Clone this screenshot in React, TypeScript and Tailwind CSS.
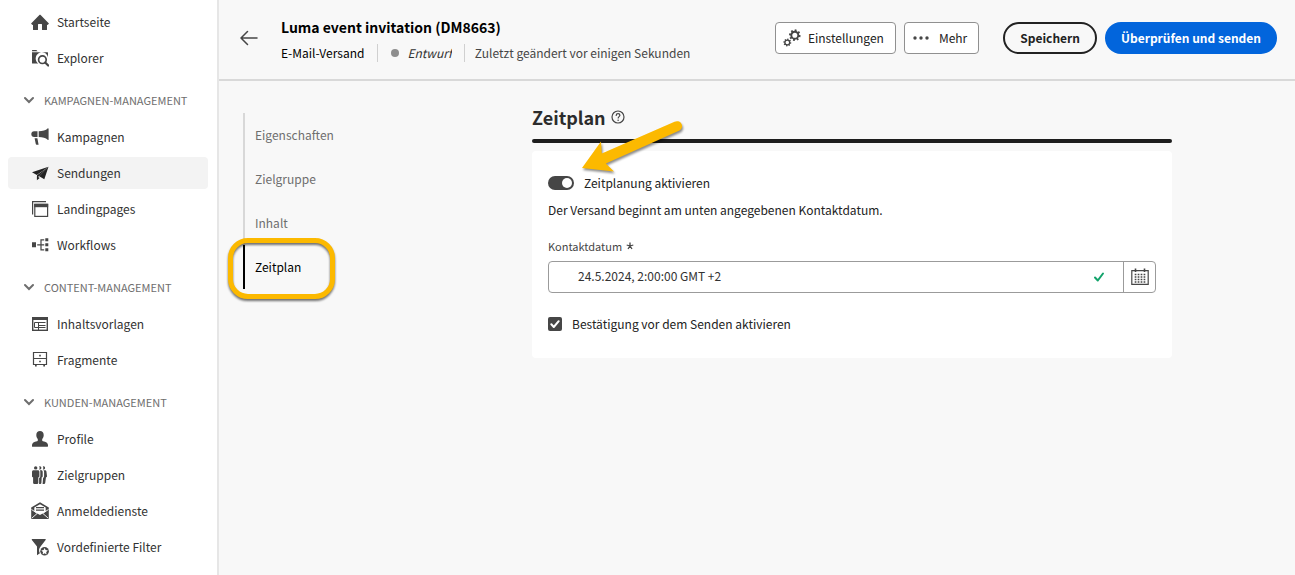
import type { ReactNode } from "react";

type IconProps = { children: ReactNode };

function Icon({ children }: IconProps) {
  return (
    <svg viewBox="0 0 18 18" className="size-[18px] shrink-0" fill="currentColor" aria-hidden="true">
      {children}
    </svg>
  );
}

const HomeIcon = () => (
  <Icon>
    <path d="M17.67 10.13 9.38 1.83a.53.53 0 0 0-.75 0L.33 10.13a.53.53 0 0 0 0 .75l.98.97a.5.5 0 0 0 .36.15H2v4.5a.5.5 0 0 0 .5.5h4a.5.5 0 0 0 .5-.5v-5a.5.5 0 0 1 .5-.5h3a.5.5 0 0 1 .5.5v5a.5.5 0 0 0 .5.5h4a.5.5 0 0 0 .5-.5V12h.33a.5.5 0 0 0 .36-.15l.98-.97a.53.53 0 0 0 0-.75Z" />
  </Icon>
);

const ExplorerIcon = () => (
  <Icon>
    <path d="M1 2.300V1.500A.5.5 0 0 1 1.500 1H5.300l1.300 1.300Z" />
    <path d="M1 3.200H16.500a.5.5 0 0 1 .5.5V8.500A6.200 6.200 0 1 0 7.200 14.500H1.500A.5.5 0 0 1 1 14Z" />
    <circle cx="11.400" cy="10.700" r="3.800" fill="none" stroke="currentColor" strokeWidth="1.700" />
    <path d="m14.200 13.500 3 3" stroke="currentColor" strokeWidth="2.200" strokeLinecap="round" />
  </Icon>
);

const CampaignIcon = () => (
  <Icon>
    <path d="M6.500 3.200v5.800H3.200A2.900 2.900 0 0 1 3.200 3.200ZM7.700 3.200C11.500 3.200 15 2.200 16.600.4c.4-.3 1-.1 1 .4v10.600c0 .5-.6.7-1 .4C15 10 11.500 9 7.700 9Z" />
    <path d="M3.600 10.200H6.400L7.600 16.700H5.600a.8.8 0 0 1-.8-.6Z" />
  </Icon>
);

const SendIcon = () => (
  <Icon>
    <path d="M17.500 2.800 1 8.300l4.800 2.800ZM17.500 2.800 13.300 15.200 8.200 12.300ZM5.900 12.200V16.200L8.700 13.900Z" />
    <path d="M17.500 2.800 6 11.200v2l2.200-.9Z" />
  </Icon>
);

const LandingIcon = () => (
  <Icon>
    <path d="M1.600 14.500V1.600H15" fill="none" stroke="currentColor" strokeWidth="1.200" />
    <rect x="3.800" y="4.400" width="12.800" height="12" fill="none" stroke="currentColor" strokeWidth="1.200" />
    <path d="M3.200 3.800h14v3.400h-14Z" />
  </Icon>
);

const WorkflowIcon = () => (
  <Icon>
    <path d="M1 6.300h4v5H1ZM14.300 2.200h3v3h-3ZM14.300 7.300h3v3h-3ZM14.300 12.300h3v3h-3Z" />
    <path d="M6.200 8.800h7M13.200 3.800H10v10h3.200" fill="none" stroke="currentColor" strokeWidth="1.200" />
  </Icon>
);

const TemplateIcon = () => (
  <Icon>
    <rect x="1.700" y="2.700" width="14.600" height="12.600" fill="none" stroke="currentColor" strokeWidth="1.400" />
    <path d="M1.500 2.500h15v2.500h-15Z" />
    <path d="M3.500 7.500H14.500M7.500 7.500V15M7.500 10.500H14.500M3.500 12.500H14.500M3.500 7.500V12.500" fill="none" stroke="currentColor" />
  </Icon>
);

const FragmentIcon = () => (
  <Icon>
    <path d="M2.500 1.500h13v12h-13ZM2.500 7.500h13" fill="none" stroke="currentColor" strokeWidth="1.200" />
    <path d="M8.200 3.800h1.600v1.600H8.200ZM8.200 9.700h1.600v1.600H8.200ZM4 13.500h1.700v2H4ZM12.300 13.500H14v2h-1.700Z" />
  </Icon>
);

const ProfileIcon = () => (
  <Icon>
    <path d="M9 1c2.200 0 3.700 1.600 3.700 4 0 1.600-.6 3.200-1.500 4.100v1.300c0 .5.300.7.800.8 2.900.5 5 1.700 5 3.900v1.100c0 .3-.2.500-.5.500h-15a.5.5 0 0 1-.5-.5v-1.100c0-2.200 2.100-3.400 5-3.900.5-.1.800-.3.800-.8V9.100C5.900 8.200 5.300 6.600 5.300 5c0-2.400 1.500-4 3.700-4Z" />
  </Icon>
);

const AudienceIcon = () => (
  <Icon>
    <circle cx="4.700" cy="1.900" r="1.700" />
    <path d="M2.700 4.200h4c1.100 0 1.700.7 1.700 1.700v4.300c0 .7-.5 1-1.100 1v5.900c0 .5-.4.800-.9.800H3c-.5 0-.9-.3-.9-.8v-5.900c-.6 0-1.100-.3-1.100-1V5.900c0-1 .6-1.700 1.700-1.700Z" />
    <path d="M8.100.3a1.700 1.700 0 1 1 0 3.200 3 3 0 0 0 0-3.200ZM8.900 4.200h1.200c1 0 1.600.7 1.600 1.700v4.300c0 .7-.5 1-1 1l-.3 5.900c0 .5-.4.800-.9.800H8.100V12c.7-.3 1.200-.9 1.200-1.700V6c0-.7-.1-1.300-.4-1.800Z" />
    <path d="M11.800.3a1.700 1.700 0 1 1 0 3.200 3 3 0 0 0 0-3.200ZM12.400 4.200h1.500c1 0 1.600.7 1.600 1.700l.5 4.300c0 .7-.5 1-1 1l-.8 5.900c0 .5-.4.800-.9.800h-1.700l.5-6c.7-.3 1-.9 1-1.600V6c0-.7-.2-1.300-.7-1.800Z" />
  </Icon>
);

const MailIcon = () => (
  <Icon>
    <path d="M9 .2 17.800 5.400v10.800a.8.8 0 0 1-.8.8H1a.8.8 0 0 1-.8-.8V5.400Z" />
    <path d="M3.300 5.600 9 2.200l5.700 3.400v4.100L9 13 3.300 9.700Z" fill="white" />
    <path d="M5 5.700h8M5 8.200h8" stroke="currentColor" strokeWidth="1.200" />
    <path d="M.5 7.500 6.300 11.300 1 16M17.500 7.500l-5.800 3.800L17 16" fill="none" stroke="white" strokeWidth=".9" />
  </Icon>
);

const FilterIcon = () => (
  <Icon>
    <path d="M1.300 1h12.900c.5 0 .7.6.4 1L9.800 8.200a6 6 0 0 0-.9 7L6 17.200V8.500L.9 2C.6 1.600.8 1 1.300 1Z" />
    <circle cx="13.600" cy="13.200" r="4.300" />
    <path d="m13.600 9.900 1 2.200 2.300.3-1.700 1.600.4 2.400-2-1.200-2 1.200.4-2.400-1.700-1.600 2.300-.3Z" fill="white" />
  </Icon>
);

const gearTeeth = [0, 45, 90, 135, 180, 225, 270, 315];

function Gear({ cx, cy, r }: { cx: number; cy: number; r: number }) {
  return (
    <g>
      <circle cx={cx} cy={cy} r={r} fill="none" stroke="currentColor" strokeWidth={r * 0.55} />
      {gearTeeth.map((angle) => (
        <path
          key={angle}
          d={`M${cx} ${cy - r}V${cy - r * 1.65}`}
          transform={`rotate(${angle + 10} ${cx} ${cy})`}
          stroke="currentColor"
          strokeWidth={r * 0.55}
        />
      ))}
    </g>
  );
}

type NavEntry = { label: string; icon: () => ReactNode; active?: boolean };
type NavSection = { title?: string; items: NavEntry[] };

const sections: NavSection[] = [
  {
    items: [
      { label: "Startseite", icon: HomeIcon },
      { label: "Explorer", icon: ExplorerIcon },
    ],
  },
  {
    title: "KAMPAGNEN-MANAGEMENT",
    items: [
      { label: "Kampagnen", icon: CampaignIcon },
      { label: "Sendungen", icon: SendIcon, active: true },
      { label: "Landingpages", icon: LandingIcon },
      { label: "Workflows", icon: WorkflowIcon },
    ],
  },
  {
    title: "CONTENT-MANAGEMENT",
    items: [
      { label: "Inhaltsvorlagen", icon: TemplateIcon },
      { label: "Fragmente", icon: FragmentIcon },
    ],
  },
  {
    title: "KUNDEN-MANAGEMENT",
    items: [
      { label: "Profile", icon: ProfileIcon },
      { label: "Zielgruppen", icon: AudienceIcon },
      { label: "Anmeldedienste", icon: MailIcon },
      { label: "Vordefinierte Filter", icon: FilterIcon },
    ],
  },
];

function Sidebar() {
  return (
    <nav className="w-[219px] shrink-0 border-r-2 border-[#e6e6e6] bg-white pt-1 pr-[9px] pb-2 pl-2">
      {sections.map((section, i) => (
        <section key={i}>
          {section.title && (
            <button type="button" className="mt-1.5 mb-px flex h-9 items-center gap-2.5 pl-4 text-[11px] text-[#6e6e6e]">
              <svg viewBox="0 0 10 10" className="size-2.5" fill="none" stroke="currentColor" strokeWidth="2" strokeLinecap="round" aria-hidden="true">
                <path d="m1 3 4 4 4-4" />
              </svg>
              {section.title}
            </button>
          )}
          <ul>
            {section.items.map(({ label, icon: Glyph, active }) => (
              <li key={label} className="py-0.5">
                <a
                  href="#"
                  aria-current={active ? "page" : undefined}
                  className={
                    active
                      ? "flex h-8 items-center gap-2 rounded bg-[#f3f3f3] pl-[23px] text-[#222222]"
                      : "flex h-8 items-center gap-2 rounded pl-[23px] text-[#464646]"
                  }
                >
                  <Glyph />
                  <span className="text-[#323232]">{label}</span>
                </a>
              </li>
            ))}
          </ul>
        </section>
      ))}
    </nav>
  );
}

function Header() {
  return (
    <header className="flex h-[81px] items-center border-b-2 border-[#d9d9d9] pb-1 pl-5 pr-[18px]">
      <button type="button" aria-label="Zurück" className="flex size-5 items-center justify-center text-[#464646]">
        <svg viewBox="0 0 18 18" className="size-[18px]" fill="none" stroke="currentColor" strokeWidth="1.500" strokeLinecap="round" strokeLinejoin="round" aria-hidden="true">
          <path d="M17 9H1.200M7.500 2.500 1 9l6.500 6.500" />
        </svg>
      </button>
      <div className="ml-[22px] flex-1 pt-1">
        <h1 className="text-sm leading-6 font-bold text-black">Luma event invitation (DM8663)</h1>
        <div className="mt-0.5 flex h-6 items-center">
          <span className="text-black">E-Mail-Versand</span>
          <span className="mx-[13px] h-[18px] w-px bg-[#d0d0d0]" />
          <span className="mr-2 size-2 rounded-full bg-[#8e8e8e]" />
          <span className="overflow-hidden text-[#323232] italic">Entwurf</span>
          <span className="mr-2.5 ml-3 h-[18px] w-px bg-[#d0d0d0]" />
          <span className="text-[#464646]">Zuletzt geändert vor einigen Sekunden</span>
        </div>
      </div>
      <div className="flex shrink-0 items-center gap-2 text-[#222222]">
        <button type="button" className="flex h-8 items-center gap-[7px] rounded border border-[#909090] bg-white pr-[11px] pl-[7px]">
          <svg viewBox="0 0 18 18" className="size-[18px] text-[#464646]" fill="currentColor" aria-hidden="true">
            <Gear cx={11.8} cy={6.2} r={3.5} />
            <Gear cx={4.3} cy={13.5} r={2.4} />
          </svg>
          Einstellungen
        </button>
        <button type="button" className="flex h-8 items-center gap-[9px] rounded border border-[#909090] bg-white pr-[11px] pl-[7px]">
          <svg viewBox="0 0 18 18" className="size-[18px] text-[#464646]" fill="currentColor" aria-hidden="true">
            <circle cx="3" cy="9" r="1.700" />
            <circle cx="9" cy="9" r="1.700" />
            <circle cx="15" cy="9" r="1.700" />
          </svg>
          Mehr
        </button>
        <button type="button" className="ml-4 h-8 rounded-full border-2 border-[#222222] px-[15px] font-bold">
          Speichern
        </button>
        <button type="button" className="h-8 rounded-full bg-[#0265dc] px-4 font-bold text-white">
          Überprüfen und senden
        </button>
      </div>
    </header>
  );
}

const steps = ["Eigenschaften", "Zielgruppe", "Inhalt", "Zeitplan"];

function StepNav() {
  return (
    <nav className="w-[289px] shrink-0">
      <ul>
        {steps.map((step) => {
          const current = step === "Zeitplan";
          return (
            <li key={step} className="relative">
              <a
                href="#"
                aria-current={current ? "step" : undefined}
                className={
                  current
                    ? "flex h-11 items-center border-l-2 border-black pl-2.5 text-black"
                    : "flex h-11 items-center border-l-2 border-[#d8d8d8] pl-2.5 text-[#6e6e6e]"
                }
              >
                {step}
              </a>
              {current && (
                <span className="pointer-events-none absolute -top-[7px] -left-[15px] h-[61px] w-[107px] rounded-[20px] border-5 border-[#fcb900] drop-shadow-[0_2px_1px_rgba(0,0,0,0.55)]" />
              )}
            </li>
          );
        })}
      </ul>
    </nav>
  );
}

function PointerArrow() {
  return (
    <svg
      viewBox="0 0 104 58"
      className="pointer-events-none absolute top-1.5 left-[47px] z-10 h-[58px] w-[104px] drop-shadow-[1px_2px_1px_rgba(0,0,0,0.45)]"
      fill="#fcb900"
      aria-hidden="true"
    >
      <path d="M3 49 22 22.500 22.800 34.500 95.500 2.800a5 5 0 0 1 5 8.800L26.800 44.500 35 52.500Z" />
    </svg>
  );
}

function SchedulePanel() {
  return (
    <div className="relative max-w-[640px] flex-1 text-[#222222]">
      <div className="-mt-2 flex h-6 items-center gap-[5px]">
        <h2 className="text-lg leading-6 font-bold text-[#2c2c2c]">Zeitplan</h2>
        <button type="button" aria-label="Hilfe" className="text-[#464646]">
          <svg viewBox="0 0 14 14" className="size-3.5" fill="none" stroke="currentColor" strokeWidth="1.200" strokeLinecap="round" aria-hidden="true">
            <circle cx="7" cy="7" r="6" />
            <path d="M5.200 5.500c0-1.100.8-1.800 1.900-1.800s1.800.7 1.800 1.600c0 1.200-1.700 1.400-1.700 2.700" />
            <path d="M7.100 10.200v.1" strokeWidth="1.500" />
          </svg>
        </button>
      </div>
      <div className="mt-2.5 h-1 rounded-full bg-[#1d1d1d]" />
      <PointerArrow />
      <form className="mt-2 rounded bg-white px-4 pt-[22px] pb-6">
        <label className="flex h-5 items-center gap-2.5">
          <input
            type="checkbox"
            role="switch"
            defaultChecked
            className="flex h-3.5 w-[26px] appearance-none items-center rounded-full bg-[#464646] pl-3.5 before:size-2.5 before:rounded-full before:bg-white"
          />
          Zeitplanung aktivieren
        </label>
        <p className="mt-[7px] leading-5">Der Versand beginnt am unten angegebenen Kontaktdatum.</p>
        <label htmlFor="contact-date" className="mt-4 flex h-5 items-center gap-1 text-[11px] text-[#464646]">
          Kontaktdatum
          <svg viewBox="0 0 8 8" className="size-2" fill="none" stroke="currentColor" strokeWidth="1.300" aria-hidden="true">
            <path d="M4 4V.5M4 4 .7 3M4 4l3.300-1M4 4 2 7M4 4l2 3" />
          </svg>
        </label>
        <div className="mt-[5px] flex h-8 items-center rounded border border-[#9b9b9b] bg-white">
          <input
            id="contact-date"
            type="text"
            defaultValue="24.5.2024, 2:00:00 GMT +2"
            className="h-full min-w-0 flex-1 bg-transparent pb-1 pl-[29px] leading-5 text-[#323232] outline-none"
          />
          <svg viewBox="0 0 12 12" className="mr-[18px] size-3" fill="none" stroke="#12a36b" strokeWidth="2" strokeLinecap="round" strokeLinejoin="round" aria-hidden="true">
            <path d="m2 6.500 2.800 3L10 2.500" />
          </svg>
          <button type="button" aria-label="Kalender öffnen" className="flex h-full w-8 items-center justify-center border-l border-[#9b9b9b] text-[#464646]">
            <svg viewBox="0 0 18 18" className="size-[18px]" fill="none" stroke="currentColor" aria-hidden="true">
              <path d="M.8 2.700h16.400v13.600H.8Z" strokeWidth="1.200" />
              <path d="M4.500.5v3.500M13.500.5v3.500" strokeWidth="1.600" />
              <path d="M3.700 6.500h10.600M3.700 9h10.600M3.700 11.500h10.600M3.700 14h10.600" strokeWidth="1.500" strokeDasharray="1.700 1.270" />
            </svg>
          </button>
        </div>
        <label className="mt-[21px] flex h-5 items-center gap-2.5">
          <span className="grid size-3.5 place-items-center">
            <input type="checkbox" defaultChecked className="col-start-1 row-start-1 size-3.5 appearance-none rounded-xs bg-[#464646]" />
            <svg viewBox="0 0 14 14" className="pointer-events-none col-start-1 row-start-1 size-3.5" fill="none" stroke="white" strokeWidth="2" strokeLinecap="round" strokeLinejoin="round" aria-hidden="true">
              <path d="m3.300 7.300 2.500 2.700 4.900-5.800" />
            </svg>
          </span>
          Bestätigung vor dem Senden aktivieren
        </label>
      </form>
    </div>
  );
}

export default function App() {
  return (
    <div className="flex min-h-screen bg-[#f8f8f8] font-['Noto_Sans_CJK_SC','Open_Sans',sans-serif] text-xs leading-5">
      <Sidebar />
      <main className="min-w-0 flex-1">
        <Header />
        <div className="flex pt-8 pr-4 pl-6">
          <StepNav />
          <SchedulePanel />
        </div>
      </main>
    </div>
  );
}
